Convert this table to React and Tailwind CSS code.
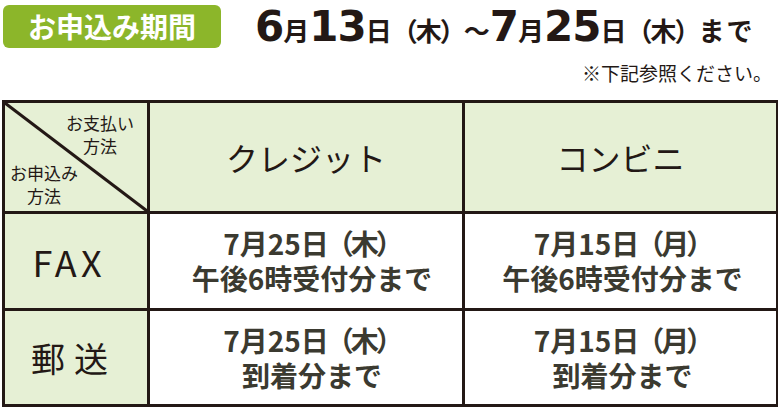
const jp = { fontFamily: '"Noto Sans CJK JP", "Noto Sans", sans-serif' };
const num = { fontFamily: '"DejaVu Sans", "Liberation Sans", sans-serif' };

const Big = ({ children }) => (
  <span className="text-[42px] font-bold leading-none tracking-[-1px]" style={num}>
    {children}
  </span>
);

const Small = ({ children, className = '' }) => (
  <span className={`text-[26px] font-bold leading-none ${className}`} style={jp}>
    {children}
  </span>
);

const BodyCell = ({ date, day, line2, shift = '' }) => (
  <div className={`bg-white flex flex-col items-center justify-center text-[28px] font-bold leading-[35px] text-[#3b3a30] ${shift}`} style={jp}>
    <div>
      {date}
      <span className="inline-block ml-[-3px] tracking-[-3px]">（{day}）</span>
    </div>
    <div>{line2}</div>
  </div>
);

export default function App() {
  return (
    <div className="w-[780px] h-[410px] bg-white overflow-hidden text-[#231815]" style={jp}>
      <div className="flex items-start pt-[5px] pl-[3px]">
        <div className="w-[218px] h-[43px] rounded-[6px] bg-[#8cb62a] flex items-center justify-center text-white text-[28px] font-bold leading-none pb-[1px]">
          お申込み期間
        </div>
        <div className="ml-[34px] flex items-baseline h-[43px] pt-[1px]">
          <Big>6</Big>
          <Small>月</Small>
          <Big>13</Big>
          <Small>日</Small>
          <Small className="tracking-[-2px]">（木）</Small>
          <Small>～</Small>
          <Big>7</Big>
          <Small>月</Small>
          <Big>25</Big>
          <Small>日</Small>
          <Small className="tracking-[-2px]">（木）</Small>
          <Small className="tracking-[2px]">まで</Small>
        </div>
      </div>
      <div className="flex justify-end pr-[8px] mt-[13px] text-[19px] leading-[23px]">
        ※下記参照ください。
      </div>
      <div className="mx-[2px] mt-[16px] bg-[#231815] p-[3px] grid grid-cols-[142px_312px_311px] grid-rows-[108px_94px_93px] gap-[3px]">
        <div className="relative bg-[#e6f0d5] flex flex-col justify-between text-[17px] leading-[23px]">
          <svg className="absolute inset-0 w-full h-full" viewBox="0 0 142 108" preserveAspectRatio="none">
            <line x1="0" y1="0" x2="142" y2="108" stroke="#231815" strokeWidth="3" />
          </svg>
          <div className="relative self-end pr-[13px] pt-[8px] text-center">
            <div>お支払い</div>
            <div>方法</div>
          </div>
          <div className="relative self-start pl-[5px] pb-[4px] text-center">
            <div>お申込み</div>
            <div>方法</div>
          </div>
        </div>
        <div className="bg-[#e6f0d5] flex items-center justify-center text-[32px]">クレジット</div>
        <div className="bg-[#e6f0d5] flex items-center justify-center text-[32px]">コンビニ</div>

        <div className="bg-[#e6f0d5] flex items-center justify-center text-[36px] tracking-[4px] pr-[14px]">FAX</div>
        <BodyCell date="7月25日" day="木" line2="午後6時受付分まで" shift="pl-[12px]" />
        <BodyCell date="7月15日" day="月" line2="午後6時受付分まで" shift="pl-[4px]" />

        <div className="bg-[#e6f0d5] flex items-center justify-center text-[34px] tracking-[9px] pr-[4px]">郵送</div>
        <BodyCell date="7月25日" day="木" line2="到着分まで" shift="pl-[12px]" />
        <BodyCell date="7月15日" day="月" line2="到着分まで" shift="pl-[4px]" />
      </div>
    </div>
  );
}
